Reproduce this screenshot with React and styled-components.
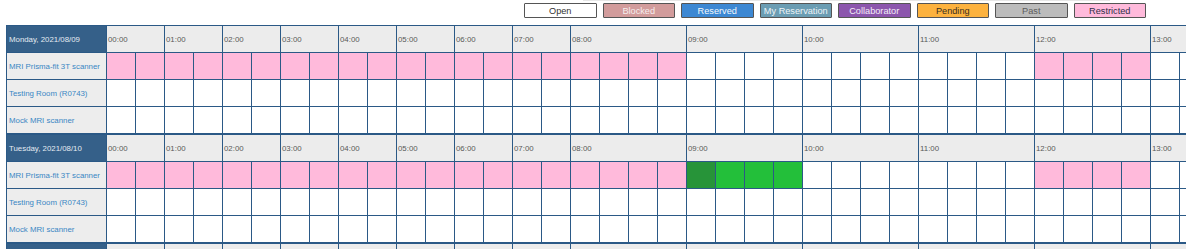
import React from 'react'
import styled, { createGlobalStyle } from 'styled-components'

const GlobalStyle = createGlobalStyle`
    html, body {
        margin: 0;
        padding: 0;
        background: #ffffff;
        overflow: hidden;
    }
    body {
        font-family: "Liberation Sans", Arial, sans-serif;
    }
`;

const legend = [
    { label: 'Open', bg: '#ffffff', color: '#333333' },
    { label: 'Blocked', bg: '#d29c9c', color: '#f6eeee' },
    { label: 'Reserved', bg: '#3d88d3', color: '#f4f8fc' },
    { label: 'My Reservation', bg: '#6b9db3', color: '#eef4f7' },
    { label: 'Collaborator', bg: '#8c56ad', color: '#f4eef8' },
    { label: 'Pending', bg: '#fdb23e', color: '#3a3020' },
    { label: 'Past', bg: '#bcbcbc', color: '#5c5c5c' },
    { label: 'Restricted', bg: '#ffbadb', color: '#30304a' },
];

// hours 00-07 are split in half hours, from 08:00 on in quarters
const hours = [0, 1, 2, 3, 4, 5, 6, 7, 8, 9, 10, 11, 12, 13].map((h) => ({
    label: String(h).padStart(2, '0') + ':00',
    slots: h < 8 ? 2 : 4,
}));

const rooms = ['MRI Prisma-fit 3T scanner', 'Testing Room (R0743)', 'Mock MRI scanner'];

const days = [
    { label: 'Monday, 2021/08/09', green: [] },
    { label: 'Tuesday, 2021/08/10', green: [20, 21, 22, 23] },
    { label: 'Wednesday, 2021/08/11', green: [] },
];

const SLOT = 29;

const slotState = (day, room, i) => {
    if (room !== 0) return 'open';
    if (i === 20 && day.green.includes(i)) return 'mine';
    if (day.green.includes(i)) return 'booked';
    if (i < 20 || (i >= 32 && i < 36)) return 'restricted';
    return 'open';
};

const slotColors = {
    open: '#ffffff',
    restricted: '#ffbadb',
    booked: '#23bf3a',
    mine: '#279439',
};

const App = () => {
    return (
        <Page>
            <GlobalStyle />
            <TopRule />
            <Legend>
                {legend.map((l) => (
                    <LegendItem key={l.label} $bg={l.bg} $color={l.color}>{l.label}</LegendItem>
                ))}
            </Legend>
            <Schedule>
                {days.map((day, d) => (
                    <DayBlock key={day.label} $first={d === 0}>
                        <Row>
                            <DateCell>{day.label}</DateCell>
                            {hours.map((h) => (
                                <HourCell key={h.label} $w={h.slots * SLOT}>{h.label}</HourCell>
                            ))}
                        </Row>
                        {rooms.map((room, r) => {
                            let idx = 0;
                            return (
                                <Row key={room}>
                                    <RoomCell>{room}</RoomCell>
                                    {hours.map((h) =>
                                        Array.from({ length: h.slots }).map((_, s) => {
                                            const i = idx++;
                                            return <Slot key={h.label + s} $bg={slotColors[slotState(day, r, i)]} />;
                                        })
                                    )}
                                </Row>
                            );
                        })}
                    </DayBlock>
                ))}
            </Schedule>
        </Page>
    )
}

export default App;

const Page = styled.div`
    width: 1186px;
    height: 249px;
    overflow: hidden;
`;

const TopRule = styled.div`
    height: 1px;
    width: 527px;
    margin-left: 583px;
    background-color: #e6e6e6;
`;

const Legend = styled.div`
    display: flex;
    justify-content: flex-end;
    gap: 6px;
    margin-top: 2px;
    padding-right: 40px;
`;

const LegendItem = styled.div`
    box-sizing: border-box;
    width: 72.5px;
    height: 15px;
    display: flex;
    align-items: center;
    justify-content: center;
    background-color: ${(p) => p.$bg};
    color: ${(p) => p.$color};
    border: 1px solid #555555;
    border-radius: 1px;
    font-size: 9.2px;
    white-space: nowrap;
`;

const Schedule = styled.div`
    margin: 7px 0 0 6px;
    border-left: 1px solid #2b5986;
    border-top: 1px solid #2b5986;
    width: max-content;
`;

const DayBlock = styled.div`
    border-top: ${(p) => (p.$first ? 'none' : '1px solid #2b5986')};
`;

const Row = styled.div`
    display: flex;
    height: 27px;
`;

const BaseCell = styled.div`
    box-sizing: border-box;
    flex: none;
    height: 27px;
    border-right: 1px solid #2b5986;
    border-bottom: 1px solid #2b5986;
    display: flex;
    align-items: center;
    font-size: 7.85px;
    white-space: nowrap;
    overflow: hidden;
`;

const DateCell = styled(BaseCell)`
    width: 100px;
    padding-left: 2px;
    background-color: #356089;
    color: #e4ebf2;
`;

const RoomCell = styled(BaseCell)`
    width: 100px;
    padding-left: 2px;
    background-color: #ededed;
    color: #3a87c4;
`;

const HourCell = styled(BaseCell)`
    width: ${(p) => p.$w}px;
    padding-left: 1px;
    background-color: #ececec;
    color: #595959;
`;

const Slot = styled(BaseCell)`
    width: ${SLOT}px;
    background-color: ${(p) => p.$bg};
`;
